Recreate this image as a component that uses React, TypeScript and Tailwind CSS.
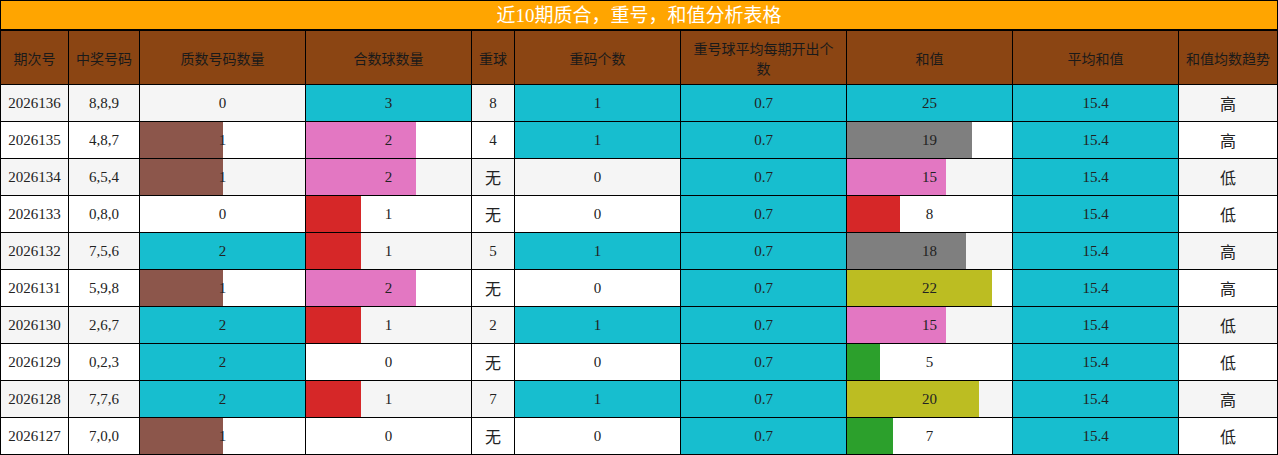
import React from "react";

const CYAN = "#17becf";
const BROWN = "#8c564b";
const PINK = "#e377c2";
const RED = "#d62728";
const GRAY = "#7f7f7f";
const OLIVE = "#bcbd22";
const GREEN = "#2ca02c";

type Row = {
  id: string;
  nums: string;
  prime: number;
  comp: number;
  heavy: string;
  rep: number;
  sum: number;
  trend: string;
};

const rows: Row[] = [
  { id: "2026136", nums: "8,8,9", prime: 0, comp: 3, heavy: "8", rep: 1, sum: 25, trend: "高" },
  { id: "2026135", nums: "4,8,7", prime: 1, comp: 2, heavy: "4", rep: 1, sum: 19, trend: "高" },
  { id: "2026134", nums: "6,5,4", prime: 1, comp: 2, heavy: "无", rep: 0, sum: 15, trend: "低" },
  { id: "2026133", nums: "0,8,0", prime: 0, comp: 1, heavy: "无", rep: 0, sum: 8, trend: "低" },
  { id: "2026132", nums: "7,5,6", prime: 2, comp: 1, heavy: "5", rep: 1, sum: 18, trend: "高" },
  { id: "2026131", nums: "5,9,8", prime: 1, comp: 2, heavy: "无", rep: 0, sum: 22, trend: "高" },
  { id: "2026130", nums: "2,6,7", prime: 2, comp: 1, heavy: "2", rep: 1, sum: 15, trend: "低" },
  { id: "2026129", nums: "0,2,3", prime: 2, comp: 0, heavy: "无", rep: 0, sum: 5, trend: "低" },
  { id: "2026128", nums: "7,7,6", prime: 2, comp: 1, heavy: "7", rep: 1, sum: 20, trend: "高" },
  { id: "2026127", nums: "7,0,0", prime: 1, comp: 0, heavy: "无", rep: 0, sum: 7, trend: "低" },
];

const sumColor: Record<number, string> = {
  25: CYAN,
  19: GRAY,
  18: GRAY,
  22: OLIVE,
  20: OLIVE,
  15: PINK,
  8: RED,
  5: GREEN,
  7: GREEN,
};

const primeColor: Record<number, string> = { 2: CYAN, 1: BROWN };
const compColor: Record<number, string> = { 3: CYAN, 2: PINK, 1: RED };

const serif = "font-['Liberation_Serif','Noto_Sans_CJK_SC',serif]";
const cjk = "font-['Noto_Sans_CJK_SC',sans-serif]";

function BarCell({ value, max, color, bg }: { value: number; max: number; color?: string; bg: string }) {
  const pct = max > 0 ? (value / max) * 100 : 0;
  const style: React.CSSProperties =
    value > 0 && color
      ? { background: `linear-gradient(to right, ${color} 0%, ${color} ${pct}%, ${bg} ${pct}%, ${bg} 100%)` }
      : { background: bg };
  return (
    <div className={`flex items-center justify-center text-[15px] text-[#222] ${serif}`} style={style}>
      {value}
    </div>
  );
}

function TextCell({ children, bg, zh }: { children: React.ReactNode; bg: string; zh?: boolean }) {
  return (
    <div
      className={`flex items-center justify-center text-[#222] ${zh ? `${cjk} text-[16px]` : `${serif} text-[15px]`}`}
      style={{ background: bg }}
    >
      {children}
    </div>
  );
}

const headers = [
  "期次号",
  "中奖号码",
  "质数号码数量",
  "合数球数量",
  "重球",
  "重码个数",
  "重号球平均每期开出个数",
  "和值",
  "平均和值",
  "和值均数趋势",
];

export default function App() {
  return (
    <div className="w-[1278px] bg-black p-px flex flex-col gap-[2px]">
      <div
        className={`h-[28px] bg-[#ffa500] flex items-center justify-center text-white text-[19px] leading-none ${serif}`}
      >
        近10期质合，重号，和值分析表格
      </div>
      <div className="grid grid-cols-[67px_70px_165px_165px_42px_165px_165px_165px_165px_98px] grid-rows-[53px_repeat(10,36px)] gap-px">
        {headers.map((h) => (
          <div
            key={h}
            className={`bg-[#8b4513] flex items-center justify-center text-center px-[6px] text-[14px] leading-[20px] text-[#1a1a1a] ${cjk}`}
          >
            {h}
          </div>
        ))}
        {rows.map((r, i) => {
          const bg = i % 2 === 0 ? "#f5f5f5" : "#ffffff";
          return (
            <React.Fragment key={r.id}>
              <TextCell bg={bg}>{r.id}</TextCell>
              <TextCell bg={bg}>{r.nums}</TextCell>
              <BarCell value={r.prime} max={2} color={primeColor[r.prime]} bg={bg} />
              <BarCell value={r.comp} max={3} color={compColor[r.comp]} bg={bg} />
              <TextCell bg={bg} zh={r.heavy === "无"}>
                {r.heavy}
              </TextCell>
              <BarCell value={r.rep} max={1} color={CYAN} bg={bg} />
              <TextCell bg={CYAN}>0.7</TextCell>
              <BarCell value={r.sum} max={25} color={sumColor[r.sum]} bg={bg} />
              <TextCell bg={CYAN}>15.4</TextCell>
              <TextCell bg={bg} zh>
                {r.trend}
              </TextCell>
            </React.Fragment>
          );
        })}
      </div>
    </div>
  );
}
